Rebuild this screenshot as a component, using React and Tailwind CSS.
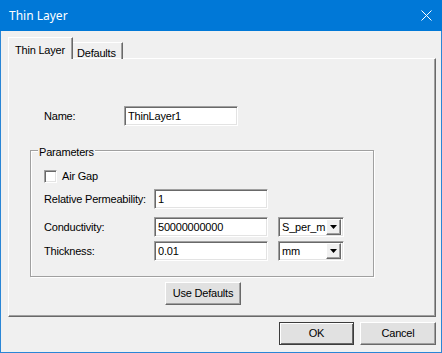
import React from "react";

const sunken =
  "bg-white border border-t-[#a0a0a0] border-l-[#a0a0a0] border-r-white border-b-white shadow-[inset_1px_1px_0_#696969,inset_-1px_-1px_0_#e3e3e3]";

function TextBox({ value, w = "w-[114px]" }) {
  return (
    <div className={`${sunken} ${w} h-[20px] flex items-center pl-[3px] text-black`}>
      {value}
    </div>
  );
}

function Combo({ value }) {
  return (
    <div className={`${sunken} w-[66px] h-[20px] flex items-center justify-between pl-[3px] pr-[2px]`}>
      <span>{value}</span>
      <div className="w-[15px] h-[16px] bg-[#f0f0f0] border border-t-white border-l-white border-r-[#696969] border-b-[#696969] shadow-[inset_-1px_-1px_0_#a0a0a0] flex items-center justify-center">
        <svg width="7" height="4" viewBox="0 0 7 4">
          <path d="M0 0H7L3.5 4Z" fill="#000" />
        </svg>
      </div>
    </div>
  );
}

function Button({ children, w, def }) {
  return (
    <div
      className={`${w} h-[23px] flex items-center justify-center bg-[#e1e1e1] border ${
        def
          ? "border-[#3c3c3c] shadow-[inset_1px_1px_0_#fff,inset_-1px_-1px_0_#696969]"
          : "border-t-white border-l-white border-r-[#696969] border-b-[#696969] shadow-[inset_-1px_-1px_0_#a0a0a0]"
      }`}
    >
      {children}
    </div>
  );
}

export default function App() {
  return (
    <div
      className="w-[442px] h-[353px] flex flex-col text-[11px] tracking-[-0.2px] text-black"
      style={{ fontFamily: '"Liberation Sans", Arial, sans-serif' }}
    >
      <div className="h-[31px] bg-[#0078d7] flex items-center justify-between pl-[9px] pr-[10px] text-white shrink-0">
        <span className="text-[12px] tracking-normal" style={{ fontFamily: '"Noto Sans", sans-serif' }}>
          Thin Layer
        </span>
        <svg width="11" height="11" viewBox="0 0 11 11">
          <path d="M0.5 0.5L10.5 10.5M10.5 0.5L0.5 10.5" stroke="#fff" strokeWidth="1" />
        </svg>
      </div>
      <div className="flex-1 bg-[#f0f0f0] border-x border-b border-[#2a86d6] flex flex-col pl-[7px] pt-[6px]">
        <div className="flex items-end h-[22px] -mb-px relative z-10">
          <div className="w-[65px] h-[22px] bg-[#f0f0f0] border-l border-t border-white border-r border-r-[#696969] shadow-[inset_-1px_0_0_#a0a0a0] flex items-start pt-[4px] pl-[6px]">
            Thin Layer
          </div>
          <div className="w-[50px] h-[17px] border-t border-t-white border-r border-r-[#696969] shadow-[inset_-1px_0_0_#a0a0a0] flex items-start pt-[2px] pl-[4px]">
            Defaults
          </div>
        </div>
        <div className="w-[428px] h-[259px] border border-t-white border-l-white border-r-[#696969] border-b-[#696969] shadow-[inset_-1px_-1px_0_#a0a0a0] flex flex-col">
          <div className="flex items-center mt-[47px] pl-[35px]">
            <span className="w-[80px]">Name:</span>
            <TextBox value="ThinLayer1" />
          </div>
          <div className="relative ml-[21px] mt-[24px] w-[344px] h-[127px] border border-[#a0a0a0] shadow-[inset_1px_1px_0_#fff,1px_1px_0_#fff] flex flex-col pl-[13px] pt-[19px]">
            <span className="absolute -top-[7px] left-[7px] bg-[#f0f0f0] px-[1px]">Parameters</span>
            <div className="flex items-center h-[13px]">
              <div className={`${sunken} w-[13px] h-[13px]`} />
              <span className="ml-[5px]">Air Gap</span>
            </div>
            <div className="flex items-center mt-[6px]">
              <span className="w-[110px]">Relative Permeability:</span>
              <TextBox value="1" />
            </div>
            <div className="flex items-center mt-[8px]">
              <span className="w-[110px]">Conductivity:</span>
              <TextBox value="50000000000" />
              <div className="ml-[10px]">
                <Combo value="S_per_m" />
              </div>
            </div>
            <div className="flex items-center mt-[4px]">
              <span className="w-[110px]">Thickness:</span>
              <TextBox value="0.01" />
              <div className="ml-[10px]">
                <Combo value="mm" />
              </div>
            </div>
          </div>
          <div className="ml-[156px] mt-[5px]">
            <Button w="w-[76px]">Use Defaults</Button>
          </div>
        </div>
        <div className="flex justify-end gap-[6px] mt-[5px] pr-[5px]">
          <Button w="w-[75px]" def>OK</Button>
          <Button w="w-[76px]">Cancel</Button>
        </div>
      </div>
    </div>
  );
}
